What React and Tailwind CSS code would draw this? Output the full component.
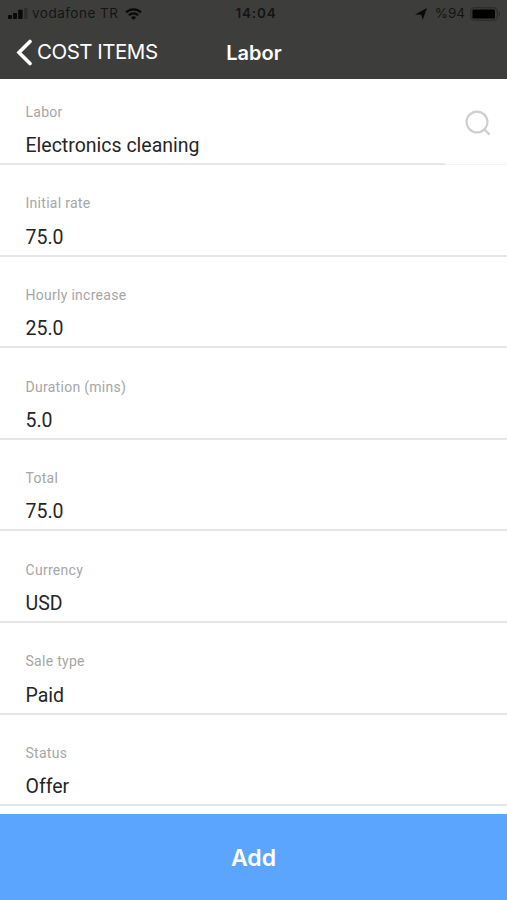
const FIELDS = [
  { label: "Labor", value: "Electronics cleaning", searchable: true },
  { label: "Initial rate", value: "75.0" },
  { label: "Hourly increase", value: "25.0" },
  { label: "Duration (mins)", value: "5.0" },
  { label: "Total", value: "75.0" },
  { label: "Currency", value: "USD" },
  { label: "Sale type", value: "Paid" },
  { label: "Status", value: "Offer" },
];

function SignalIcon() {
  return (
    <svg width="20" height="11" viewBox="0 0 20 11" fill="#0a0a09">
      <rect x="0" y="7" width="4" height="4" rx="0.8" />
      <rect x="5" y="5" width="4" height="6" rx="0.8" />
      <rect x="10.2" y="1.8" width="4.4" height="9.2" rx="0.8" />
      <rect x="16" y="0" width="3.6" height="11" rx="0.8" fill="#2f302e" />
    </svg>
  );
}

function WifiIcon() {
  return (
    <svg width="17" height="12" viewBox="0 0 17 12" fill="none" stroke="#0a0a09">
      <path d="M1 4.4a10.8 10.8 0 0 1 15 0" strokeWidth="2.3" />
      <path d="M3.8 7.3a6.8 6.8 0 0 1 9.4 0" strokeWidth="2.1" />
      <path d="M8.5 12 5.9 9.4a3.8 3.8 0 0 1 5.2 0Z" fill="#0a0a09" stroke="none" />
    </svg>
  );
}

function BatteryIcon() {
  return (
    <svg width="31" height="14" viewBox="0 0 31 14">
      <rect x="0.75" y="0.75" width="26.5" height="12.5" rx="3.6" fill="none" stroke="#282927" strokeWidth="1.1" />
      <rect x="2.4" y="2.6" width="22.6" height="9" rx="1.2" fill="#000" />
      <path d="M28.8 4.8c1.6.6 1.6 3.8 0 4.4Z" fill="#282927" />
    </svg>
  );
}

function StatusBar() {
  return (
    <div className="grid h-[27px] grid-cols-3 items-center pr-[6px] pl-2 text-[13.5px] text-[#141513]">
      <div className="flex items-center whitespace-nowrap">
        <SignalIcon />
        <span className="ml-1 tracking-[0.5px]">vodafone TR</span>
        <span className="ml-[6px]">
          <WifiIcon />
        </span>
      </div>
      <span className="pl-[3px] text-center font-semibold tracking-[0.8px]">14:04</span>
      <div className="flex items-center justify-end">
        <svg width="12" height="12" viewBox="0 0 12 12" fill="#0a0a09">
          <path d="M12 0 7.6 12 6.4 6.8 0 6.6Z" />
        </svg>
        <span className="mr-[5px] ml-[8px]">%94</span>
        <BatteryIcon />
      </div>
    </div>
  );
}

function NavBar() {
  return (
    <div className="grid flex-1 grid-cols-3 items-center px-4 pb-px text-white">
      <button type="button" className="flex items-center whitespace-nowrap text-left text-[20.5px]">
        <svg width="17" height="27" viewBox="0 0 17 27" fill="none" stroke="#fff" strokeWidth="3.6">
          <path d="M14 2.5 3 13.5l11 11" strokeLinecap="round" />
        </svg>
        <span className="ml-1 tracking-[-0.5px]">COST ITEMS</span>
      </button>
      <h1 className="pl-px text-center text-[20px] font-semibold">Labor</h1>
    </div>
  );
}

function Field({ label, value, searchable }) {
  return (
    <div className={searchable ? "flex h-[86px]" : "flex h-[91.6px]"}>
      <div className="flex flex-1 flex-col justify-end border-b-2 border-[#e6e6e6] pb-[3px] pl-[25.5px]">
        <label className="text-[14px] leading-5 tracking-[0.28px] text-[#a6a6a6]">{label}</label>
        <span className="mt-[10.2px] text-[19.5px] leading-7 text-[#262626]">{value}</span>
      </div>
      {searchable && (
        <div className="flex w-[62px] items-center justify-center border-b border-[#f3f3f3] pt-0.5 pl-[3px]">
          <svg width="26" height="26" viewBox="0 0 26 26" fill="none" stroke="#cfcfcf" strokeWidth="2.2">
            <circle cx="12" cy="12" r="10.4" />
            <path d="m19 19 5.6 5.6" />
          </svg>
        </div>
      )}
    </div>
  );
}

export default function App() {
  return (
    <div className="flex h-[900px] w-[507px] flex-col overflow-hidden bg-white font-['Roboto',sans-serif]">
      <header className="flex h-[79px] shrink-0 flex-col bg-[#3d3e3b] font-['Inter',sans-serif]">
        <StatusBar />
        <NavBar />
      </header>
      <main className="flex-1 overflow-hidden">
        {FIELDS.map((field) => (
          <Field key={field.label} {...field} />
        ))}
      </main>
      <button
        type="button"
        className="h-[86px] shrink-0 bg-[#5ca5ff] pt-0.5 font-['Inter',sans-serif] text-[23px] font-semibold text-white"
      >
        Add
      </button>
    </div>
  );
}
